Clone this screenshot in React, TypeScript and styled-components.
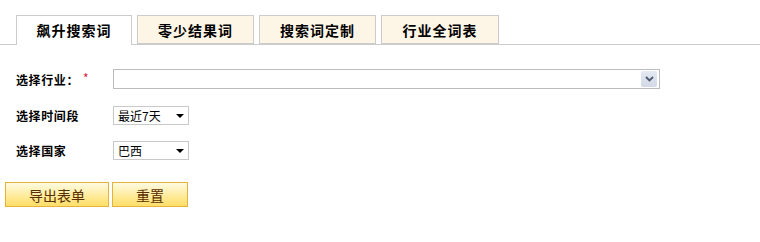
import styled, { createGlobalStyle } from "styled-components";

const GlobalStyle = createGlobalStyle`
  body {
    margin: 0;
    background: #fff;
    font-family: "Noto Sans CJK SC", "DejaVu Sans", sans-serif;
    color: #000;
  }
`;

const TabBar = styled.div`
  display: flex;
  align-items: flex-end;
  padding: 15px 0 0 16px;
  border-bottom: 1px solid #ccc;
  height: 29px;
`;

const Tab = styled.div<{ $active?: boolean; $w: number }>`
  box-sizing: border-box;
  width: ${(p) => p.$w}px;
  height: ${(p) => (p.$active ? 30 : 29)}px;
  margin-right: 5px;
  margin-bottom: ${(p) => (p.$active ? -1 : 0)}px;
  border: 1px solid #ccc;
  border-bottom: ${(p) => (p.$active ? "none" : "1px solid #ccc")};
  background: ${(p) => (p.$active ? "#fff" : "#fdf5e6")};
  display: flex;
  align-items: center;
  justify-content: center;
  font-size: 14px;
  font-weight: bold;
  letter-spacing: 1px;
  padding-bottom: ${(p) => (p.$active ? 1 : 0)}px;
`;

const Form = styled.div`
  padding: 24px 0 0 16px;
  display: flex;
  flex-direction: column;
`;

const Row = styled.div<{ $gap: number }>`
  display: flex;
  align-items: center;
  margin-bottom: ${(p) => p.$gap}px;
`;

const Label = styled.div`
  width: 97px;
  font-size: 12px;
  font-weight: bold;
  letter-spacing: 0.6px;
  display: flex;
  align-items: center;
`;

const Star = styled.span`
  color: #e0203a;
  font-weight: normal;
  font-size: 12px;
  margin-left: 4px;
  position: relative;
  top: -2px;
`;

const Combo = styled.div`
  box-sizing: border-box;
  width: 547px;
  height: 20px;
  border: 1px solid #bcbcbc;
  display: flex;
  justify-content: flex-end;
  align-items: center;
  padding-right: 2px;
`;

const ComboButton = styled.div`
  width: 16px;
  height: 16px;
  background: linear-gradient(#e4e9f2, #d2d9e6);
  border-radius: 2px;
  display: flex;
  align-items: center;
  justify-content: center;
`;

const Select = styled.div`
  box-sizing: border-box;
  width: 76px;
  height: 19px;
  border: 1px solid #c9c9c9;
  display: flex;
  align-items: center;
  justify-content: space-between;
  padding: 0 4px 0 4px;
  font-size: 12px;
`;

const Caret = styled.span`
  width: 0;
  height: 0;
  border-left: 4px solid transparent;
  border-right: 4px solid transparent;
  border-top: 4px solid #000;
`;

const Buttons = styled.div`
  display: flex;
  gap: 3px;
  padding: 22px 0 0 5px;
`;

const Button = styled.div<{ $w: number }>`
  box-sizing: border-box;
  width: ${(p) => p.$w}px;
  height: 25px;
  border: 1px solid #e7b13c;
  background: linear-gradient(#fffbe2, #ffe789 70%, #ffdf6a);
  color: #5a2e00;
  font-size: 14px;
  display: flex;
  align-items: center;
  justify-content: center;
`;

export default function App() {
  return (
    <>
      <GlobalStyle />
      <TabBar>
        <Tab $active $w={116}>飙升搜索词</Tab>
        <Tab $w={117}>零少结果词</Tab>
        <Tab $w={117}>搜索词定制</Tab>
        <Tab $w={118}>行业全词表</Tab>
      </TabBar>
      <Form>
        <Row $gap={17}>
          <Label>
            选择行业：<Star>*</Star>
          </Label>
          <Combo>
            <ComboButton>
              <svg width="9" height="6" viewBox="0 0 9 6">
                <path d="M1 1 L4.5 4.5 L8 1" stroke="#4d5a70" strokeWidth="1.8" fill="none" />
              </svg>
            </ComboButton>
          </Combo>
        </Row>
        <Row $gap={16}>
          <Label>选择时间段</Label>
          <Select>
            最近7天
            <Caret />
          </Select>
        </Row>
        <Row $gap={0}>
          <Label>选择国家</Label>
          <Select>
            巴西
            <Caret />
          </Select>
        </Row>
      </Form>
      <Buttons>
        <Button $w={104}>导出表单</Button>
        <Button $w={76}>重置</Button>
      </Buttons>
    </>
  );
}
